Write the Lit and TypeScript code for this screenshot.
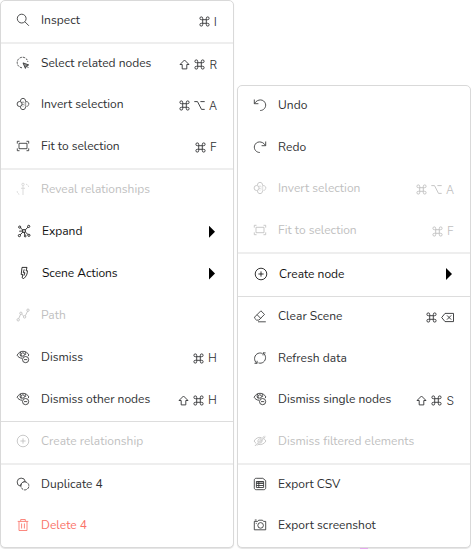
import { LitElement, html, svg, css, nothing, TemplateResult } from "lit";
import { customElement, property } from "lit/decorators.js";
import { classMap } from "lit/directives/class-map.js";

interface Item {
  icon: string;
  label: string;
  width: number;
  keys?: string[];
  disabled?: boolean;
  danger?: boolean;
  submenu?: boolean;
}
interface Section {
  height: number;
  rule?: "soft" | "thin";
  items: Item[];
}

const invert = svg`<path d="M4.5 4.3C4.4 2.4 5.4 1.4 7 1.4S9.6 2.4 9.5 4.3M4.5 9.7C4.4 11.6 5.4 12.6 7 12.6S9.6 11.6 9.5 9.7"/><circle cx="3.6" cy="7" r="2.5"/><path d="M9.4 4.7C11.5 4.1 12.8 5.4 12.8 7S11.5 9.9 9.4 9.3" stroke-dasharray="2.4 .6"/><path d="M7 4.6v5" stroke-dasharray="1.3 1"/><path d="M8.6 6h1.6M8.6 8h1.6"/>`;
const fit = svg`<path d="M1.3 4.6V2.3h2.2M10.5 2.3h2.2v2.3M12.7 9.4v2.3h-2.2M3.5 11.7H1.3V9.4"/><rect x="3" y="4.3" width="8" height="5.4"/>`;
const plus = svg`<circle cx="7" cy="7" r="5.8"/><path d="M7 4.4v5.2M4.4 7h5.2"/>`;
const eyeMinus = svg`<path d="M6 8.3C3.8 8.1 2 6.9 1.1 5.2 2.4 2.8 4.4 1.3 7 1.3s4.8 1.5 5.8 3.6l-.6 1.2"/><path d="M4.7 1.8C3.7 4 4 6.2 5.7 6.9M9 1.8C9.8 3 9.9 4 9.4 5"/><circle cx="6.8" cy="4.5" r="1.7"/><circle cx="9.6" cy="9.6" r="3.1" fill="#fff"/><path d="M8 9.6h3.2"/>`;

const icons: Record<string, TemplateResult> = {
  inspect: svg`<circle cx="5.7" cy="5.6" r="4.4"/><path d="M8.9 8.8l4 4"/>`,
  select: svg`<path d="M6 11.8A5.3 5.3 0 1 1 11.8 6" stroke-dasharray="2.2 1"/><path d="M7 6.9l5.7 2-2.3 1-1 2.5z" fill="#999"/><path d="M10.4 9.9l2 2"/>`,
  invert,
  fit,
  reveal: svg`<g opacity=".65"><path d="M7 4v9M5 6.3h4"/><circle cx="7" cy="2.4" r="1.2"/><path d="M1.2 9.2c0 2 1 3 2.6 3.2M10 2.2c1.8.4 2.7 1.6 2.7 3.4" stroke-dasharray="1.5 1"/></g>`,
  expand: svg`<path d="M6 6.2L3.5 3.9M8 6.2l3-3.1M6 7.9l-2.9 3M8.2 7.9l2.9 2.7M2.2 7.2l3.3-.2M7.3 8.4l.6 2.6"/><circle cx="7" cy="7" r="1.5"/><circle cx="2.7" cy="3.1" r="1.1"/><circle cx="11.7" cy="2.4" r="1.1"/><circle cx="2.4" cy="11.6" r="1.1"/><circle cx="11.9" cy="11.3" r="1.1"/><circle cx="8.2" cy="12" r=".9"/>`,
  scene: svg`<path d="M5 1.4h5L9.1 4.7h1.3c.3 2.5-1.2 6-3.7 7.9l-1.6-.8.8-3.2H4.2z"/><path d="M7.2 3.4L6.3 6.7h1.6L7 9.6"/>`,
  path: svg`<path d="M2.7 10.7L4.5 6.4M5.8 6.3l2 1.8M9.3 7.8l2.3-4.6"/><circle cx="2.2" cy="11.8" r="1.2"/><circle cx="4.9" cy="5.3" r="1.2"/><circle cx="8.6" cy="8.9" r="1.2"/><circle cx="12" cy="2.2" r="1.2"/>`,
  dismiss: eyeMinus,
  plus,
  duplicate: svg`<path d="M4.4 9.2A4.1 4.1 0 1 1 9.3 4.5"/><path d="M5.4 7A4 4 0 0 0 8.9 12.9 4 4 0 0 0 12.9 8.9 4 4 0 0 0 7 5.4" stroke-dasharray="2.8 .8"/><path d="M4.5 9.2c0-2.7 2-4.6 4.8-4.7"/>`,
  trash: svg`<path d="M1.7 3.4h10.6M4.7 3.2V1.5h4.6v1.7M3 3.6v8.9h8V3.6M5.6 5.5v5M8.4 5.5v5"/>`,
  undo: svg`<path d="M1.3 1.5v4.2h4.1M1.5 5.4C4.7.5 11 .9 12.5 5.8c.9 3.5-1.8 6.7-5.3 6.7"/>`,
  redo: svg`<path d="M12.7 1.5v4.2H8.6M12.5 5.4C9.3.5 3 .9 1.5 5.8c-.9 3.5 1.8 6.7 5.3 6.7"/>`,
  eraser: svg`<path d="M1.6 8.1l6.3-6.3 3.6 3.6-5.6 5.7H3.5L1.7 9.3zM4.1 5.7l3.6 3.7M5 12.8h7.8"/>`,
  refresh: svg`<path d="M3.8 12.2C.7 9.7.9 5.2 3.9 3c1.4-1 3.3-1.3 5-.7M10.2 1.9c3 2.4 3.2 6.9.2 9.2-1.4 1.1-3.2 1.4-4.9.8"/><path d="M1.5 12.3h2.6V9.8M12.6 1.9H10v2.5"/>`,
  hidden: svg`<path d="M5.2 10.4C8.6 11.2 11.5 9.6 12.9 7c-.6-1-1.3-1.8-2.1-2.4M8.5 3.6C5.4 2.8 2.6 4.3 1.1 7c.5.9 1.1 1.7 1.9 2.3M11.6 1.8L1.9 12M12.4 2.7L4 11.6M5 8c-.5-2 1-3.6 2.9-3.2M9 6.2c.3 1.7-.6 2.7-1.9 2.9"/>`,
  csv: svg`<path d="M3.3 1.3h6.5l2.9 2.3v7.2c0 1.2-.8 1.9-1.9 1.9H3.3c-1.2 0-2-.7-2-1.9V3.2c0-1.2.8-1.9 2-1.9z"/><path d="M3.4 4.5h7.2v6H3.4zM3.4 5h7.2M3.4 6.5h7.2M3.4 8.5h7.2M5.8 4.5v6"/>`,
  camera: svg`<path d="M1.3 3.4h3.4l1-1.2h3.8l1 1.2h2.2v8.4H1.3z"/><circle cx="7.6" cy="7.4" r="2.8"/><path d="M1.8 2h1.8M2.8 5.4h.9"/>`,
};

const keyIcons: Record<string, TemplateResult> = {
  cmd: svg`<path d="M3.7 3.7h3.6v3.6H3.7zM3.7 3.7H2.4a1.4 1.4 0 1 1 1.3-1.4zM7.3 3.7V2.3a1.4 1.4 0 1 1 1.3 1.4zM7.3 7.3h1.3a1.4 1.4 0 1 1-1.3 1.4zM3.7 7.3v1.4a1.4 1.4 0 1 1-1.3-1.4z"/>`,
  shift: svg`<path d="M5.5 1L10 5.5H7.8v4.4H3.2V5.5H1z"/>`,
  opt: svg`<path d="M.3 1.6h3.2l4 7.8h3.2M6.4 1.6h4.3"/>`,
  del: svg`<path d="M4 1.4h8.5v8.2H4L.7 5.5zM6 3.4l4.2 4.2M10.2 3.4L6 7.6"/>`,
};

@customElement("menu-row")
class MenuRow extends LitElement {
  @property({ attribute: false }) item!: Item;

  static styles = css`
    :host { display: flex; flex: 1; min-height: 0; }
    .row {
      flex: 1; display: flex; align-items: center; box-sizing: border-box;
      padding: 0 16px 3px 15px; color: #303133;
    }
    .submenu { color: #111; padding-left: 16px; }
    .disabled { color: #bfbfbf; }
    .danger { color: #fa7268; }
    svg { display: block; fill: none; stroke: currentColor; stroke-linejoin: round; flex: none; }
    .icon { width: 14px; height: 14px; stroke-width: .85; margin-right: 11px; }
    .submenu .icon { margin-left: -.5px; margin-right: 11.5px; }
    .label { font-size: 12px; line-height: 16px; white-space: nowrap; }
    .keys {
      margin-left: auto; display: flex; align-items: center; gap: 4px; padding-top: 3px;
      font: 12px/14px Inter, "Liberation Sans", sans-serif; font-weight: 300;
    }
    .key { height: 11px; stroke-width: .9; }
    .arrow {
      margin-left: auto; margin-right: 2px; margin-top: 1px; width: 6px; height: 12px;
      background: #000; clip-path: polygon(0 0, 100% 50%, 0 100%);
    }
  `;

  async firstUpdated() {
    await document.fonts.ready;
    const el = this.renderRoot.querySelector<HTMLElement>(".label")!;
    const natural = el.getBoundingClientRect().width;
    const gap = (this.item.width - natural) / this.item.label.length;
    el.style.letterSpacing = gap.toFixed(3) + "px";
  }

  render() {
    const { icon, label, keys, disabled, danger, submenu } = this.item;
    return html`<div class=${classMap({ row: true, disabled: !!disabled, danger: !!danger, submenu: !!submenu })}>
      <svg class="icon" viewBox="0 0 14 14">${icons[icon]}</svg>
      <span class="label">${label}</span>
      ${keys
        ? html`<span class="keys">${keys.map((k) =>
            keyIcons[k]
              ? html`<svg class="key" width=${k === "del" ? 13 : 11} height="11" viewBox="0 0 ${k === "del" ? 13 : 11} 11">${keyIcons[k]}</svg>`
              : html`<span>${k}</span>`)}</span>`
        : nothing}
      ${submenu ? html`<span class="arrow"></span>` : nothing}
    </div>`;
  }
}

const selectionMenu: Section[] = [
  { height: 41, items: [{ icon: "inspect", label: "Inspect", width: 39, keys: ["cmd", "I"] }] },
  { height: 126, rule: "soft", items: [
    { icon: "select", label: "Select related nodes", width: 110.4, keys: ["shift", "cmd", "R"] },
    { icon: "invert", label: "Invert selection", width: 82.6, keys: ["cmd", "opt", "A"] },
    { icon: "fit", label: "Fit to selection", width: 78.6, keys: ["cmd", "F"] },
  ] },
  { height: 253, rule: "soft", items: [
    { icon: "reveal", label: "Reveal relationships", width: 109, disabled: true },
    { icon: "expand", label: "Expand", width: 40.4, submenu: true },
    { icon: "scene", label: "Scene Actions", width: 75.6, submenu: true },
    { icon: "path", label: "Path", width: 25, disabled: true },
    { icon: "dismiss", label: "Dismiss", width: 42, keys: ["cmd", "H"] },
    { icon: "dismiss", label: "Dismiss other nodes", width: 109.2, keys: ["shift", "cmd", "H"] },
  ] },
  { height: 42, rule: "thin", items: [{ icon: "plus", label: "Create relationship", width: 102.2, disabled: true }] },
  { height: 84, rule: "soft", items: [
    { icon: "duplicate", label: "Duplicate 4", width: 61.8 },
    { icon: "trash", label: "Delete 4", width: 46, danger: true },
  ] },
];

const sceneMenu: Section[] = [
  { height: 166, items: [
    { icon: "undo", label: "Undo", width: 29.5 },
    { icon: "redo", label: "Redo", width: 28.4 },
    { icon: "invert", label: "Invert selection", width: 82.4, keys: ["cmd", "opt", "A"], disabled: true },
    { icon: "fit", label: "Fit to selection", width: 78.6, keys: ["cmd", "F"], disabled: true },
  ] },
  { height: 44, rule: "soft", items: [{ icon: "plus", label: "Create node", width: 65.4, submenu: true }] },
  { height: 167, rule: "thin", items: [
    { icon: "eraser", label: "Clear Scene", width: 64.4, keys: ["cmd", "del"] },
    { icon: "refresh", label: "Refresh data", width: 68.8 },
    { icon: "dismiss", label: "Dismiss single nodes", width: 113.2, keys: ["shift", "cmd", "S"] },
    { icon: "hidden", label: "Dismiss filtered elements", width: 136.2, disabled: true },
  ] },
  { height: 84, rule: "soft", items: [
    { icon: "csv", label: "Export CSV", width: 62.3 },
    { icon: "camera", label: "Export screenshot", width: 97.8 },
  ] },
];

@customElement("app-root")
export class AppRoot extends LitElement {
  static styles = css`
    :host {
      display: flex; gap: 3px; align-items: flex-start; width: 471px; height: 549px;
      overflow: hidden; background: #fff; font-family: Nunito, "Nunito Sans", "Noto Sans", sans-serif;
    }
    .menu {
      position: relative; box-sizing: border-box; width: 234px; flex: none; background: #fff;
      border: 1px solid #d9d9d9; border-radius: 5px; box-shadow: 0 1px 1px #e4e4e4;
    }
    .scene { margin-top: 85px; }
    .scene::after {
      content: ""; position: absolute; top: 100%; left: 122px; width: 8px; height: 1px;
      margin-top: 1px; background: #e6a8ee;
    }
    .section { display: flex; flex-direction: column; box-sizing: border-box; }
    .soft { border-top: 2px solid #eee; }
    .thin { border-top: 1px solid #ddd; }
    .h41 { height: 41px; } .h42 { height: 42px; } .h44 { height: 44px; } .h84 { height: 84px; }
    .h126 { height: 126px; } .h166 { height: 166px; } .h167 { height: 167px; } .h253 { height: 253px; }
  `;

  private menu(name: string, sections: Section[]) {
    return html`<div class="menu ${name}">${sections.map((s) =>
      html`<div class="section ${s.rule ?? ""} h${s.height}">
        ${s.items.map((i) => html`<menu-row .item=${i}></menu-row>`)}
      </div>`)}</div>`;
  }

  render() {
    return html`${this.menu("selection", selectionMenu)}${this.menu("scene", sceneMenu)}`;
  }
}
